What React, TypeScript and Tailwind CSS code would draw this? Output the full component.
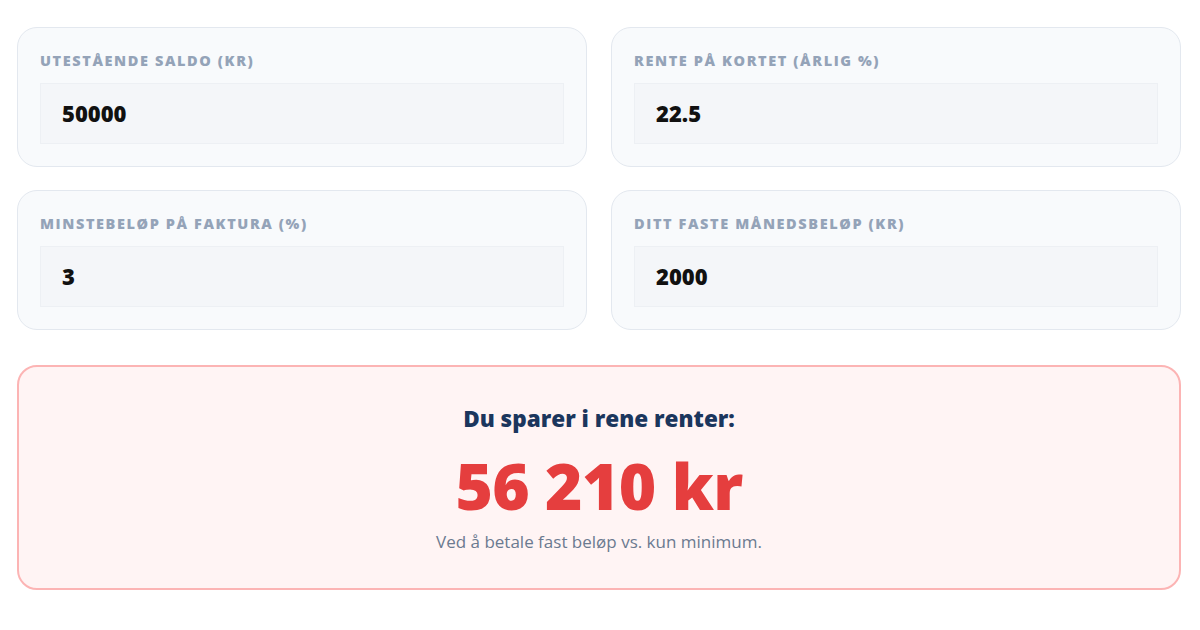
import React from 'react';

const fields = [
  { label: 'Utestående saldo (kr)', value: '50000' },
  { label: 'Rente på kortet (årlig %)', value: '22.5' },
  { label: 'Minstebeløp på faktura (%)', value: '3' },
  { label: 'Ditt faste månedsbeløp (kr)', value: '2000' },
];

const Field: React.FC<{ label: string; value: string }> = ({ label, value }) => (
  <div className="rounded-[20px] border border-[#e3e8ef] bg-[#f8fafc] px-[22px] pt-[22px] pb-[22px]">
    <div className="text-[14.5px] leading-[22px] font-extrabold uppercase tracking-[0.11em] text-[#94a3b8]">{label}</div>
    <div className="mt-[11px] h-[61px] border border-[#edf0f4] bg-[#f4f6f9] px-[21px] flex items-center">
      <span className="text-[22px] font-extrabold text-[#111111]">{value}</span>
    </div>
  </div>
);

export default function App() {
  return (
    <div className="min-h-[630px] bg-white pl-[17px] pr-[19px] pt-[27px]" style={{ fontFamily: '"Open Sans", "Noto Sans", sans-serif' }}>
      <div className="grid grid-cols-2 gap-x-[24px] gap-y-[23px]">
        {fields.map((f) => (
          <Field key={f.label} label={f.label} value={f.value} />
        ))}
      </div>
      <div className="mt-[35px] h-[225px] rounded-[20px] border-2 border-[#fcb4b4] bg-[#fff4f4] flex flex-col items-center pt-[37px]">
        <div className="text-[22.5px] leading-[30px] font-extrabold text-[#1b365d]">Du sparer i rene renter:</div>
        <div className="mt-[17px] text-[64px] leading-[70px] font-extrabold text-[#e53e3e] tracking-[-0.01em]">56 210 kr</div>
        <div className="mt-[10px] text-[17px] leading-[22px] text-[#6b7a90]">Ved å betale fast beløp vs. kun minimum.</div>
      </div>
    </div>
  );
}
